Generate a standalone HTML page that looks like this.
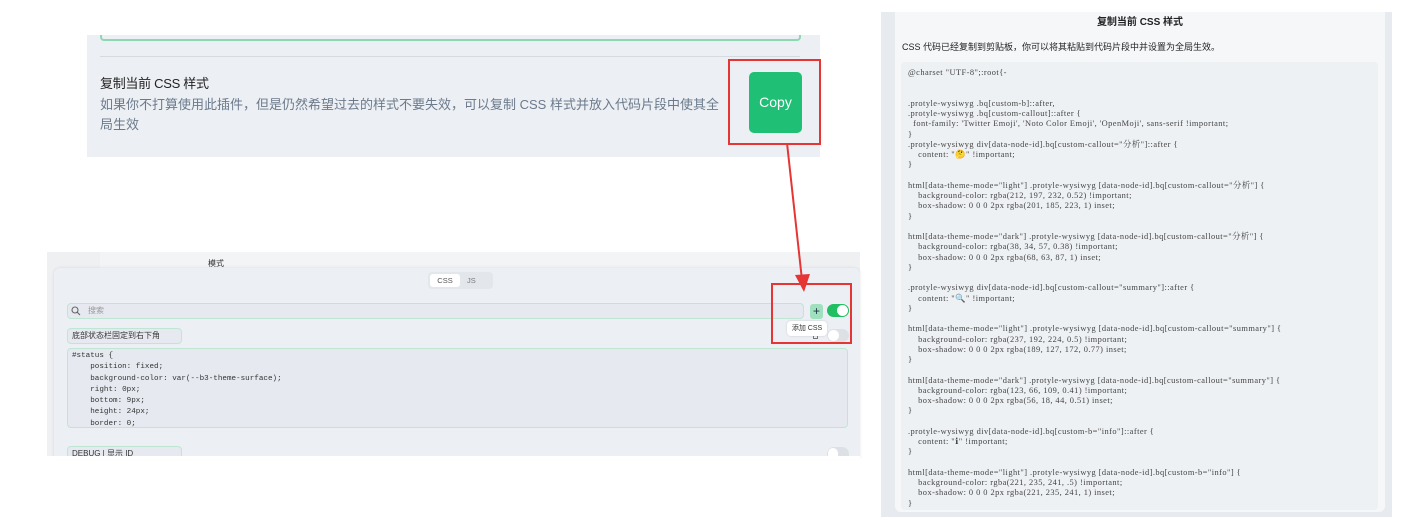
<!DOCTYPE html>
<html><head><meta charset="utf-8"><style>
*{margin:0;padding:0;box-sizing:border-box}
body{width:1419px;height:526px;background:#fff;position:relative;overflow:hidden;font-family:"Liberation Sans","Noto Sans CJK SC",sans-serif}
.a{position:absolute}
pre{font-family:"Liberation Mono","Noto Sans CJK SC",monospace}
</style></head><body>
<!-- top panel -->
<div class="a" style="left:87px;top:35px;width:733px;height:122px;background:#eceff3"></div>
<div class="a" style="left:100px;top:35px;width:701px;height:6px;border:2px solid #8dd8b2;border-top:none;border-radius:0 0 4px 4px"></div>
<div class="a" style="left:100px;top:56px;width:700px;height:1px;background:#d6dae0"></div>
<div class="a" style="left:100px;top:73px;font-size:13px;color:#222;letter-spacing:-0.3px">复制当前 CSS 样式</div>
<div class="a" style="left:100px;top:95px;width:631px;font-size:13px;line-height:20px;color:#6b7a8c;letter-spacing:0px">如果你不打算使用此插件，但是仍然希望过去的样式不要失效，可以复制 CSS 样式并放入代码片段中使其全局生效</div>
<div class="a" style="left:749px;top:72px;width:53px;height:61px;background:#1fbf75;border-radius:5px;color:#fff;font-size:14px;line-height:61px;text-align:center">Copy</div>
<div class="a" style="left:728px;top:59px;width:93px;height:86px;border:2px solid #e53535"></div>
<!-- bottom panel -->
<div class="a" style="left:47px;top:252px;width:813px;height:204px;background:#eef0f2"></div>
<div class="a" style="left:100px;top:252px;width:700px;height:20px;background:#f3f4f6"></div>
<div class="a" style="left:208px;top:258px;font-size:8px;color:#333">模式</div>
<div class="a" style="left:54px;top:268px;width:806px;height:190px;background:#eceff4;border-radius:6px 6px 0 0;box-shadow:0 0 3px rgba(0,0,0,.1)"></div>
<div class="a" style="left:428px;top:272px;width:65px;height:17px;background:#e3e7ec;border-radius:4px"></div>
<div class="a" style="left:430px;top:274px;width:30px;height:13px;background:#fff;border-radius:3px;font-size:7.5px;line-height:13px;text-align:center;color:#555">CSS</div>
<div class="a" style="left:467px;top:274px;font-size:7.5px;line-height:13px;color:#777">JS</div>
<div class="a" style="left:67px;top:303px;width:737px;height:16px;border:1px solid #bfe6d2;border-radius:4px;background:#e6eaf0;font-size:8px;line-height:14px;padding-left:20px;color:#999">搜索</div>
<svg class="a" style="left:71px;top:306px" width="10" height="10"><circle cx="4" cy="4" r="3" fill="none" stroke="#666" stroke-width="1.1"/><line x1="6.3" y1="6.3" x2="9" y2="9" stroke="#666" stroke-width="1.1"/></svg>
<div class="a" style="left:810px;top:304px;width:13px;height:15px;background:#9fe0bf;border-radius:3px;font-size:12px;line-height:14px;text-align:center;color:#234">+</div>
<div class="a" style="left:827px;top:304px;width:22px;height:13px;background:#1fbf62;border-radius:7px"></div>
<div class="a" style="left:837px;top:305px;width:11px;height:11px;background:#fff;border-radius:50%"></div>
<div class="a" style="left:827px;top:329px;width:22px;height:13px;background:#dde1e6;border-radius:7px"></div>
<div class="a" style="left:828px;top:330px;width:11px;height:11px;background:#fff;border-radius:50%"></div>
<div class="a" style="left:813px;top:333px;width:5px;height:6px;border:1px solid #777"></div>
<div class="a" style="left:787px;top:321px;width:40px;height:15px;background:#fff;border-radius:4px;font-size:7px;line-height:15px;text-align:center;color:#333;box-shadow:0 0 2px rgba(0,0,0,.15)">添加 CSS</div>
<div class="a" style="left:771px;top:283px;width:81px;height:61px;border:2px solid #e53535"></div>
<div class="a" style="left:67px;top:328px;width:115px;height:16px;border:1px solid #bfe6d2;border-radius:4px;background:#e6eaf0;font-size:8px;line-height:14px;padding-left:4px;color:#333">底部状态栏固定到右下角</div>
<div class="a" style="left:67px;top:348px;width:781px;height:80px;border:1px solid #bfe6d2;border-radius:4px;background:#e6eaf0;overflow:hidden"><pre style="font-size:7.6px;line-height:11.3px;color:#333;padding:2px 4px">#status {
    position: fixed;
    background-color: var(--b3-theme-surface);
    right: 0px;
    bottom: 9px;
    height: 24px;
    border: 0;</pre></div>
<div class="a" style="left:67px;top:446px;width:115px;height:12px;border:1px solid #bfe6d2;border-bottom:none;border-radius:4px 4px 0 0;background:#e6eaf0;font-size:8px;line-height:14px;padding-left:4px;color:#333;overflow:hidden">DEBUG | 显示 ID</div>
<div class="a" style="left:827px;top:447px;width:22px;height:9px;background:#dde1e6;border-radius:7px 7px 0 0"></div>
<div class="a" style="left:828px;top:448px;width:10px;height:8px;background:#fff;border-radius:5px 5px 0 0"></div>
<div class="a" style="left:0;top:456px;width:860px;height:4px;background:#fff"></div>
<!-- arrow -->
<svg class="a" style="left:0;top:0;z-index:5" width="1419" height="526"><line x1="787" y1="143" x2="802" y2="280" stroke="#e53535" stroke-width="2"/><polygon points="795,275 810,274 804,292" fill="#e53535"/></svg>
<!-- right panel -->
<div class="a" style="left:881px;top:12px;width:511px;height:505px;background:#e7eaee"></div>
<div class="a" style="left:895px;top:12px;width:490px;height:500px;background:#f5f7f9;border-radius:0 0 6px 6px"></div>
<div class="a" style="left:895px;top:13px;width:490px;text-align:center;font-size:10px;font-weight:bold;color:#222">复制当前 CSS 样式</div>
<div class="a" style="left:902px;top:40px;font-size:9px;color:#222">CSS 代码已经复制到剪贴板，你可以将其粘贴到代码片段中并设置为全局生效。</div>
<div class="a" style="left:901px;top:62px;width:477px;height:448px;background:#eef1f4;border-radius:4px;overflow:hidden"><pre style="font-family:'Liberation Serif','Noto Serif CJK SC',serif;font-size:8.4px;line-height:10.25px;color:#444;padding:6px 7px;letter-spacing:0.45px">@charset "UTF-8";:root{-


.protyle-wysiwyg .bq[custom-b]::after,
.protyle-wysiwyg .bq[custom-callout]::after {
  font-family: 'Twitter Emoji', 'Noto Color Emoji', 'OpenMoji', sans-serif !important;
}
.protyle-wysiwyg div[data-node-id].bq[custom-callout="分析"]::after {
    content: "🤔" !important;
}

html[data-theme-mode="light"] .protyle-wysiwyg [data-node-id].bq[custom-callout="分析"] {
    background-color: rgba(212, 197, 232, 0.52) !important;
    box-shadow: 0 0 0 2px rgba(201, 185, 223, 1) inset;
}

html[data-theme-mode="dark"] .protyle-wysiwyg [data-node-id].bq[custom-callout="分析"] {
    background-color: rgba(38, 34, 57, 0.38) !important;
    box-shadow: 0 0 0 2px rgba(68, 63, 87, 1) inset;
}

.protyle-wysiwyg div[data-node-id].bq[custom-callout="summary"]::after {
    content: "🔍" !important;
}

html[data-theme-mode="light"] .protyle-wysiwyg [data-node-id].bq[custom-callout="summary"] {
    background-color: rgba(237, 192, 224, 0.5) !important;
    box-shadow: 0 0 0 2px rgba(189, 127, 172, 0.77) inset;
}

html[data-theme-mode="dark"] .protyle-wysiwyg [data-node-id].bq[custom-callout="summary"] {
    background-color: rgba(123, 66, 109, 0.41) !important;
    box-shadow: 0 0 0 2px rgba(56, 18, 44, 0.51) inset;
}

.protyle-wysiwyg div[data-node-id].bq[custom-b="info"]::after {
    content: "ℹ" !important;
}

html[data-theme-mode="light"] .protyle-wysiwyg [data-node-id].bq[custom-b="info"] {
    background-color: rgba(221, 235, 241, .5) !important;
    box-shadow: 0 0 0 2px rgba(221, 235, 241, 1) inset;
}

html[data-theme-mode="dark"] .protyle-wysiwyg [data-node-id].bq[custom-b="info"] {</pre></div>
</body></html>
